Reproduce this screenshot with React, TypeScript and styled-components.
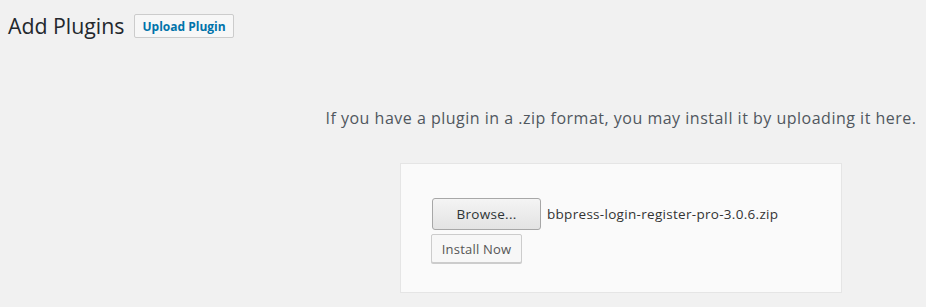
import React from 'react';
import styled, { createGlobalStyle } from 'styled-components';

const GlobalStyle = createGlobalStyle`
  html, body {
    margin: 0;
    padding: 0;
    background: #f1f1f1;
  }
  body {
    font-family: "Open Sans", "Noto Sans", sans-serif;
    color: #444;
  }
`;

const Wrap = styled.div`
  padding: 14px 0 0 8px;
  height: 307px;
  box-sizing: border-box;
  overflow: hidden;
`;

const Header = styled.div`
  display: flex;
  align-items: center;
  gap: 10px;
`;

const Title = styled.h1`
  margin: 0;
  font-size: 21.3px;
  font-weight: 400;
  line-height: 24px;
  color: #23282d;
`;

const UploadButton = styled.button`
  height: 24px;
  padding: 0 7px;
  border: 1px solid #ccc;
  border-radius: 2px;
  background: #f7f7f7;
  color: #0073aa;
  font-family: inherit;
  font-size: 12px;
  font-weight: 700;
  cursor: pointer;
`;

const UploadArea = styled.div`
  padding-left: 308px;
  width: 610px;
  display: flex;
  flex-direction: column;
  align-items: center;
`;

const Help = styled.p`
  margin: 68px 0 0;
  font-size: 16px;
  letter-spacing: 0.5px;
  line-height: 24px;
  color: #50575e;
  white-space: nowrap;
`;

const Card = styled.form`
  margin-top: 33px;
  width: 442px;
  height: 130px;
  box-sizing: border-box;
  padding: 34px 31px 0;
  background: #fafafa;
  border: 1px solid #e5e5e5;
  display: flex;
  flex-direction: column;
  align-items: flex-start;
  gap: 4px;
`;

const FileRow = styled.div`
  display: flex;
  align-items: center;
  gap: 6px;
  font-size: 13.5px;
  letter-spacing: 0.3px;
  color: #333;
`;

const BrowseButton = styled.button`
  width: 109px;
  height: 32px;
  border: 1px solid #a7a7a7;
  border-radius: 3px;
  background: linear-gradient(#f4f4f4, #e3e3e3);
  color: #2e3436;
  font-family: inherit;
  font-size: 13.5px;
  letter-spacing: 0.3px;
`;

const InstallButton = styled.button`
  margin-left: -1px;
  width: 91px;
  height: 29px;
  padding: 0;
  border: 1px solid #ccc;
  border-radius: 2px;
  background: #f7f7f7;
  box-shadow: 0 1px 0 #ccc;
  color: #555;
  font-family: inherit;
  font-size: 13px;
  letter-spacing: 0.2px;
`;

export default function App() {
  return (
    <>
      <GlobalStyle />
      <Wrap>
        <Header>
          <Title>Add Plugins</Title>
          <UploadButton>Upload Plugin</UploadButton>
        </Header>
        <UploadArea>
          <Help>If you have a plugin in a .zip format, you may install it by uploading it here.</Help>
          <Card>
            <FileRow>
              <BrowseButton type="button">Browse...</BrowseButton>
              <span>bbpress-login-register-pro-3.0.6.zip</span>
            </FileRow>
            <InstallButton type="button">Install Now</InstallButton>
          </Card>
        </UploadArea>
      </Wrap>
    </>
  );
}
